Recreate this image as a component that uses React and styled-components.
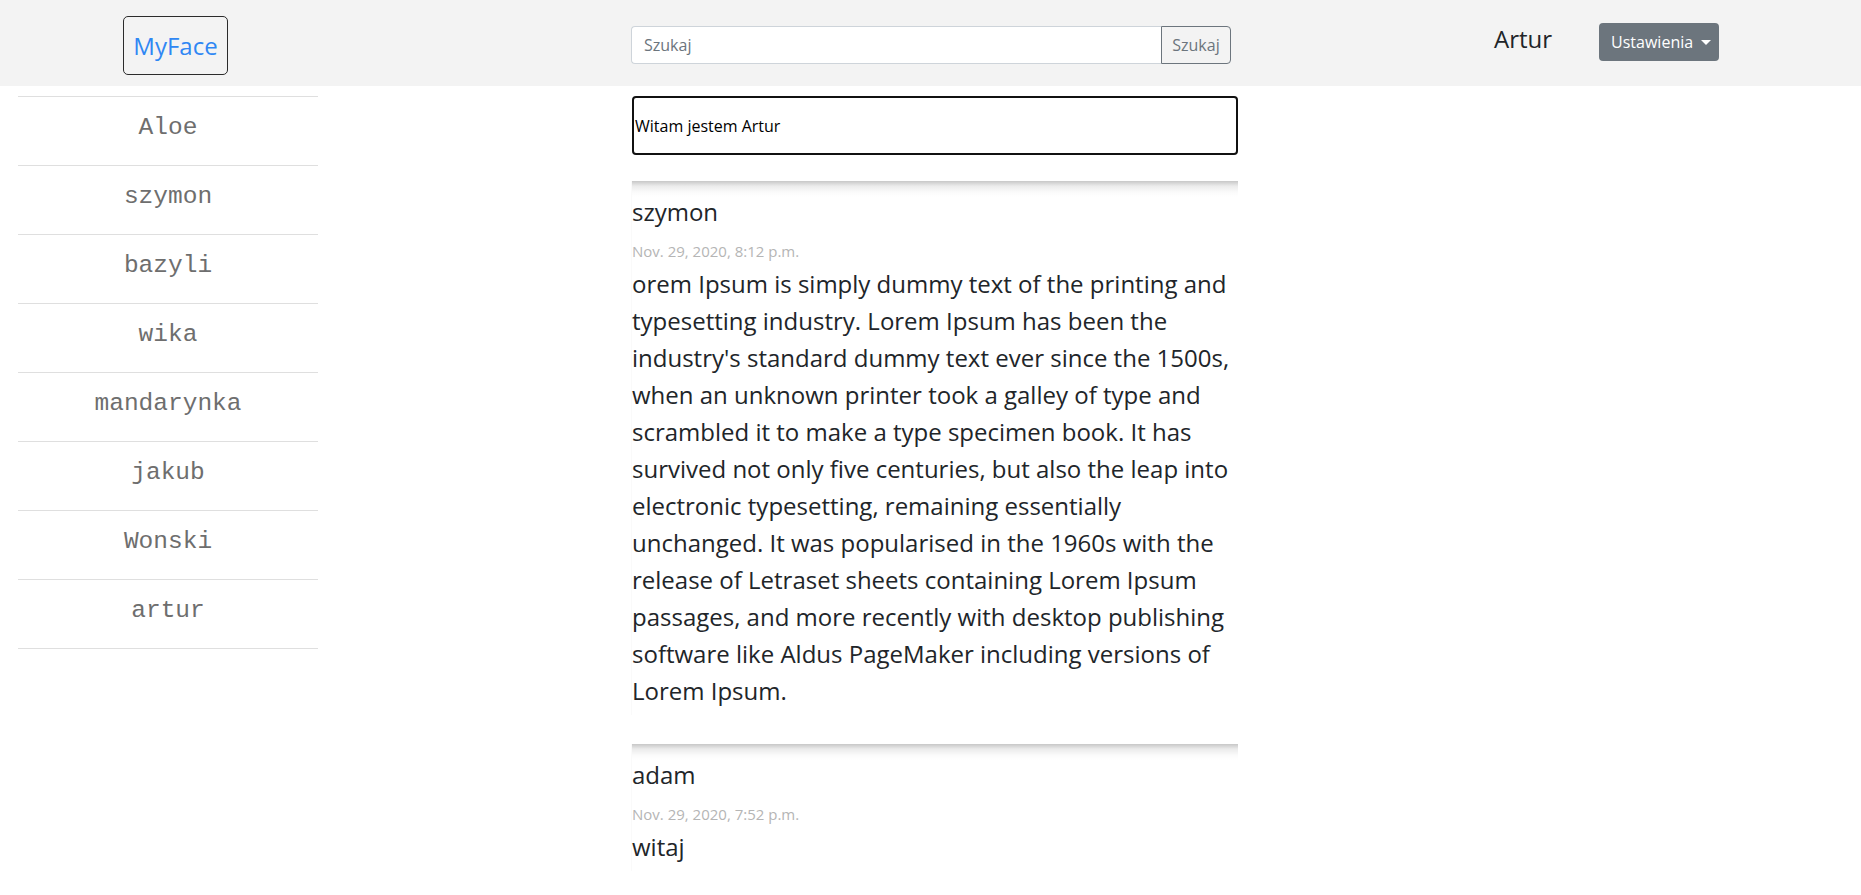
import React from "react";
import styled, { createGlobalStyle } from "styled-components";

const Global = createGlobalStyle`
  html { scrollbar-width: none; }
  body {
    margin: 0;
    font-family: "Open Sans", "Noto Sans", Arial, sans-serif;
    color: #212529;
    background: #fff;
  }
  * { box-sizing: border-box; }
`;

const Header = styled.header`
  height: 86px;
  background: #f3f3f3;
  display: grid;
  grid-template-columns: 351px 280px 607px 1fr;
  align-items: start;
`;

const BrandCell = styled.div`
  display: flex;
  justify-content: center;
  padding-top: 16px;
`;

const Brand = styled.a`
  width: 105px;
  height: 59px;
  border: 1px solid #2b2b2b;
  border-radius: 5px;
  display: flex;
  align-items: center;
  justify-content: center;
  color: #2f87f3;
  font-size: 24px;
  line-height: 30px;
  text-decoration: none;
`;

const SearchForm = styled.form`
  grid-column: 3;
  margin-top: 26px;
  width: 600px;
  display: flex;
  height: 38px;
`;

const SearchInput = styled.input`
  flex: 1;
  height: 38px;
  border: 1px solid #ced4da;
  border-right: none;
  border-radius: 4px 0 0 4px;
  padding: 0 12px;
  font-family: inherit;
  font-size: 16px;
  color: #495057;
  background: #fff;
  outline: none;
  &::placeholder { color: #6c757d; }
`;

const SearchButton = styled.button`
  width: 70px;
  height: 38px;
  border: 1px solid #6c757d;
  border-radius: 0 4px 4px 0;
  background: transparent;
  color: #6c757d;
  font-family: inherit;
  font-size: 16px;
  padding: 0;
`;

const UserArea = styled.div`
  grid-column: 4;
  display: flex;
  align-items: flex-start;
  padding-left: 256px;
  gap: 47px;
`;

const UserName = styled.span`
  margin-top: 24px;
  font-size: 24px;
  line-height: 30px;
  color: #212529;
`;

const SettingsButton = styled.button`
  margin-top: 23px;
  width: 120px;
  height: 38px;
  border: none;
  border-radius: 4px;
  background: #6c757d;
  color: #fff;
  font-family: inherit;
  font-size: 16px;
  padding: 0 12px;
  display: flex;
  align-items: center;
  &::after {
    content: "";
    margin-left: 8px;
    border-top: 5px solid #fff;
    border-left: 5px solid transparent;
    border-right: 5px solid transparent;
  }
`;

const Main = styled.main`
  display: grid;
  grid-template-columns: 351px 280px 607px 1fr;
  margin-top: 10px;
  align-items: start;
`;

const FriendList = styled.ul`
  list-style: none;
  margin: 0 0 0 18px;
  padding: 0;
  width: 300px;
  border-bottom: 1px solid #dfdfdf;
`;

const Friend = styled.li`
  height: 69px;
  padding-bottom: 7px;
  border-top: 1px solid #dfdfdf;
  display: flex;
  align-items: center;
  justify-content: center;
  font-family: "Liberation Mono", "Courier New", monospace;
  font-size: 24.5px;
  color: #6e6e6e;
`;

const Feed = styled.section`
  grid-column: 3;
  display: flex;
  flex-direction: column;
`;

const StatusBox = styled.div`
  height: 59px;
  margin-left: 1px;
  border: 2px solid #111;
  border-radius: 4px;
  display: flex;
  align-items: center;
  padding: 0 1px;
  font-size: 16px;
  color: #000;
  margin-bottom: 26px;
`;

const Post = styled.article`
  padding: 16px 0 6px;
  margin-bottom: 29px;
  border-left: 1px solid #fafafa;
  background: linear-gradient(
    to bottom,
    rgba(0, 0, 0, 0.22) 0,
    rgba(0, 0, 0, 0.08) 5px,
    rgba(0, 0, 0, 0.02) 11px,
    rgba(0, 0, 0, 0) 16px
  );
`;

const Author = styled.h4`
  margin: 0 0 14px;
  font-size: 24px;
  line-height: 30px;
  font-weight: 400;
`;

const PostDate = styled.div`
  font-size: 15px;
  line-height: 20px;
  color: #b5b5b5;
  margin-bottom: 4px;
`;

const Body = styled.p`
  margin: 0;
  font-size: 24px;
  line-height: 37px;
`;

const friends = ["Aloe", "szymon", "bazyli", "wika", "mandarynka", "jakub", "Wonski", "artur"];

const posts = [
  {
    author: "szymon",
    date: "Nov. 29, 2020, 8:12 p.m.",
    text:
      "orem Ipsum is simply dummy text of the printing and typesetting industry. Lorem Ipsum has been the industry's standard dummy text ever since the 1500s, when an unknown printer took a galley of type and scrambled it to make a type specimen book. It has survived not only five centuries, but also the leap into electronic typesetting, remaining essentially unchanged. It was popularised in the 1960s with the release of Letraset sheets containing Lorem Ipsum passages, and more recently with desktop publishing software like Aldus PageMaker including versions of Lorem Ipsum.",
  },
  { author: "adam", date: "Nov. 29, 2020, 7:52 p.m.", text: "witaj" },
];

export default function App() {
  return (
    <>
      <Global />
      <Header>
        <BrandCell>
          <Brand href="#">MyFace</Brand>
        </BrandCell>
        <SearchForm onSubmit={(e) => e.preventDefault()}>
          <SearchInput placeholder="Szukaj" />
          <SearchButton type="submit">Szukaj</SearchButton>
        </SearchForm>
        <UserArea>
          <UserName>Artur</UserName>
          <SettingsButton type="button">Ustawienia</SettingsButton>
        </UserArea>
      </Header>
      <Main>
        <FriendList>
          {friends.map((f) => (
            <Friend key={f}>{f}</Friend>
          ))}
        </FriendList>
        <Feed>
          <StatusBox>Witam jestem Artur</StatusBox>
          {posts.map((p) => (
            <Post key={p.author}>
              <Author>{p.author}</Author>
              <PostDate>{p.date}</PostDate>
              <Body>{p.text}</Body>
            </Post>
          ))}
        </Feed>
      </Main>
    </>
  );
}
